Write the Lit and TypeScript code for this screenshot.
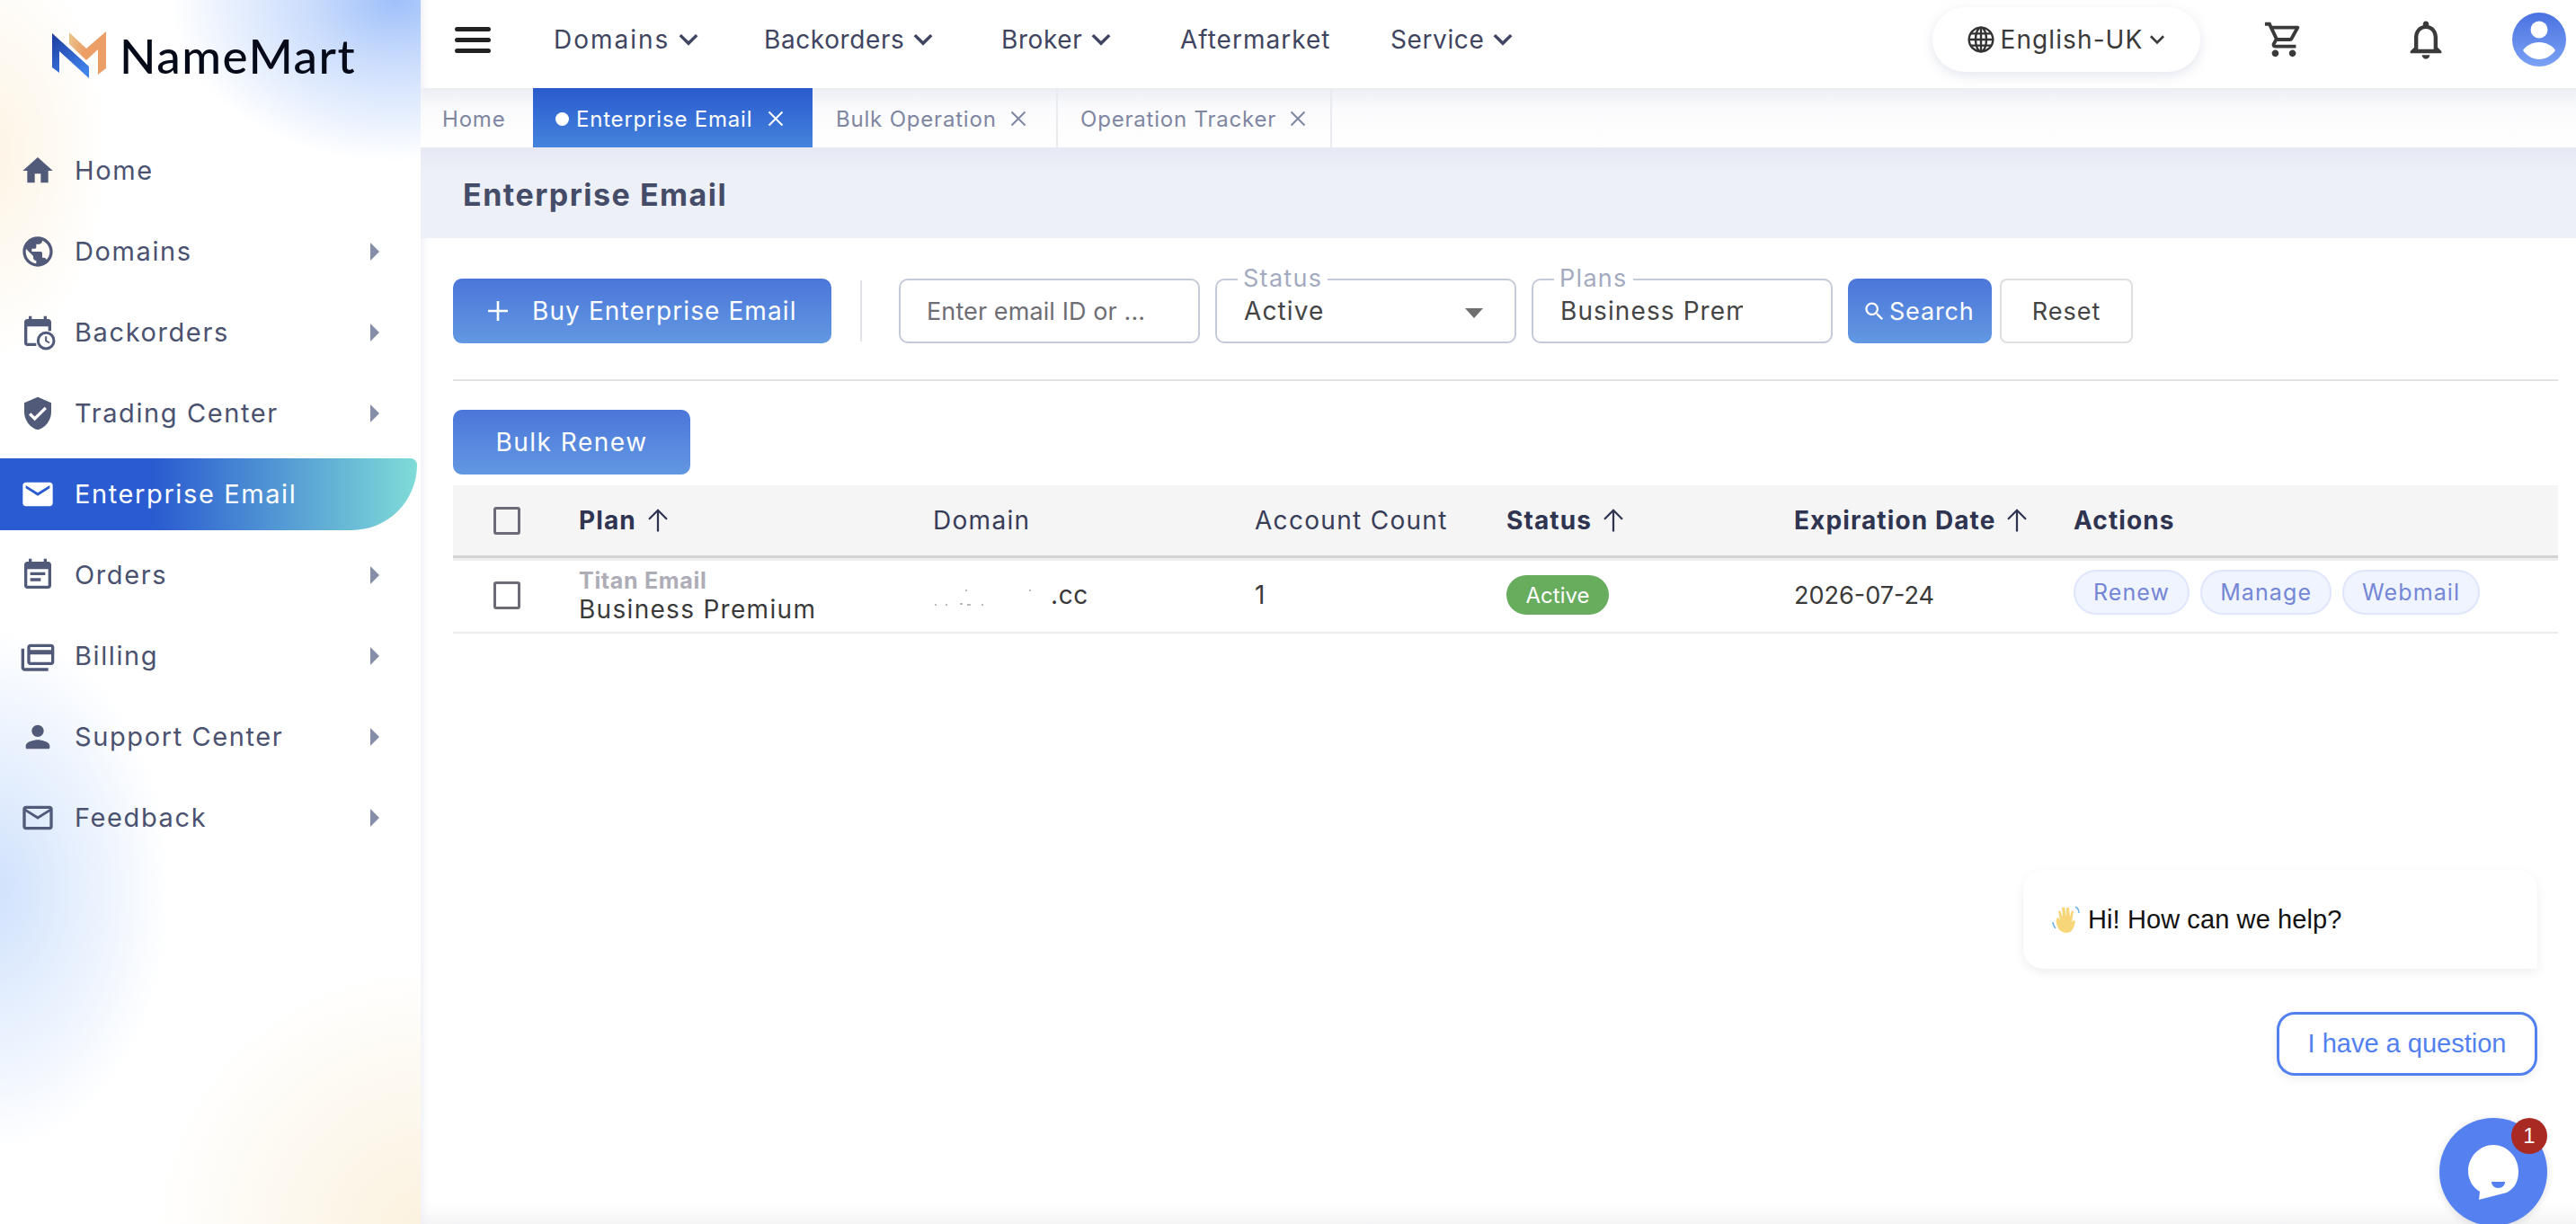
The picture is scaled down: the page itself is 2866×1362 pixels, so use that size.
import { LitElement, html, css, svg } from 'lit'
import { customElement } from 'lit/decorators.js'

const ICONS: Record<string, unknown> = {
  home: svg`<path d="M10 20v-6h4v6h5v-8h3L12 3 2 12h3v8z"/>`,
  public: svg`<path d="M12 2C6.48 2 2 6.48 2 12s4.48 10 10 10 10-4.48 10-10S17.52 2 12 2zm-1 17.93c-3.95-.49-7-3.85-7-7.93 0-.62.08-1.21.21-1.79L9 15v1c0 1.1.9 2 2 2v1.93zm6.9-2.54c-.26-.81-1-1.39-1.9-1.39h-1v-3c0-.55-.45-1-1-1H8v-2h2c.55 0 1-.45 1-1V7h2c1.1 0 2-.9 2-2v-.41c2.93 1.19 5 4.06 5 7.41 0 2.08-.8 3.97-2.1 5.39z"/>`,
  backorder: svg`<path d="M6 1h2v2h8V1h2v2h1c1.1 0 2 .9 2 2v6h-2V8H5v11h6v2H5c-1.1 0-2-.9-2-2V5c0-1.1.9-2 2-2h1z"/><circle cx="17.5" cy="17.5" r="5.300" fill="#fff" stroke="currentColor" stroke-width="1.8"/><path d="M16.900 14.500h1.200v2.700l2 1.200-.6 1-2.600-1.600z"/>`,
  shield: svg`<path d="M12 1L3 5v6c0 5.55 3.84 10.74 9 12 5.16-1.26 9-6.45 9-12V5l-9-4zm-2 16l-4-4 1.41-1.41L10 14.17l6.59-6.59L18 9l-8 8z"/>`,
  mail: svg`<path d="M20 4H4c-1.1 0-1.99.9-1.99 2L2 18c0 1.1.9 2 2 2h16c1.1 0 2-.9 2-2V6c0-1.1-.9-2-2-2zm0 4l-8 5-8-5V6l8 5 8-5v2z"/>`,
  note: svg`<path d="M17 10H7v2h10v-2zm2-7h-1V1h-2v2H8V1H6v2H5c-1.11 0-1.99.9-1.99 2L3 19c0 1.1.89 2 2 2h14c1.1 0 2-.9 2-2V5c0-1.1-.9-2-2-2zm0 16H5V8h14v11zm-5-5H7v2h7v-2z"/>`,
  billing: svg`<path d="M3 7H1v13c0 1.1.9 2 2 2h16v-2H3z"/><path d="M21 4H7c-1.1 0-2 .9-2 2v10c0 1.1.9 2 2 2h14c1.1 0 2-.9 2-2V6c0-1.1-.9-2-2-2zm0 12H7v-5h14zm0-8H7V6h14z"/>`,
  person: svg`<path d="M12 12c2.21 0 4-1.79 4-4s-1.79-4-4-4-4 1.79-4 4 1.79 4 4 4zm0 2c-2.67 0-8 1.34-8 4v1c0 .55.45 1 1 1h14c.55 0 1-.45 1-1v-1c0-2.66-5.33-4-8-4z"/>`,
  mailOutline: svg`<path d="M20 4H4c-1.1 0-1.99.9-1.99 2L2 18c0 1.1.9 2 2 2h16c1.1 0 2-.9 2-2V6c0-1.1-.9-2-2-2zm0 14H4V8l8 5 8-5v10zm-8-7L4 6h16l-8 5z"/>`,
}

const MENU = [
  { label: 'Home', icon: 'home', arrow: false },
  { label: 'Domains', icon: 'public', arrow: true },
  { label: 'Backorders', icon: 'backorder', arrow: true },
  { label: 'Trading Center', icon: 'shield', arrow: true },
  { label: 'Enterprise Email', icon: 'mail', arrow: false, active: true },
  { label: 'Orders', icon: 'note', arrow: true },
  { label: 'Billing', icon: 'billing', arrow: true },
  { label: 'Support Center', icon: 'person', arrow: true },
  { label: 'Feedback', icon: 'mailOutline', arrow: true },
]

const chevron = html`<svg class="chev" viewBox="0 0 24 24"><path d="M3.500 7.500 12 16l8.500-8.500" fill="none" stroke="currentColor" stroke-width="3.200"/></svg>`
const closeX = html`<svg class="x" viewBox="0 0 20 20"><path d="M2.500 2.500l15 15M17.500 2.500l-15 15" fill="none" stroke="currentColor" stroke-width="2"/></svg>`
const upArrow = html`<svg class="up" viewBox="0 0 24 24"><path d="M12 22V3M4 11l8-8 8 8" fill="none" stroke="currentColor" stroke-width="1.800"/></svg>`

@customElement('app-root')
export class AppRoot extends LitElement {
  static styles = css`
    :host {
      display: block;
      width: 2866px;
      height: 1362px;
      overflow: hidden;
      position: relative;
      font-family: Inter, 'Open Sans', sans-serif;
      color: #4a5270;
      background: #fff;
    }
    .shell {
      display: flex;
      height: 100%;
    }

    /* sidebar */
    .side {
      width: 468px;
      flex: none;
      padding-top: 36px;
      box-sizing: border-box;
      background:
        radial-gradient(250px 180px at 440px 0px, #9fc0fa 0%, rgba(159, 192, 250, 0.55) 38%, rgba(255, 255, 255, 0) 100%),
        radial-gradient(130px 230px at -10px 170px, #fdf4e4 0%, rgba(253, 244, 228, 0) 100%),
        radial-gradient(200px 290px at -10px 990px, #cfe1fc 0%, rgba(207, 225, 252, 0) 100%),
        radial-gradient(310px 300px at 480px 1375px, #fbf1dd 0%, rgba(251, 241, 221, 0) 100%),
        #fff;
    }
    .logo {
      display: flex;
      align-items: center;
      height: 50px;
      padding-left: 58px;
      gap: 15px;
    }
    .logo svg {
      width: 60px;
      height: 52px;
      flex: none;
    }
    .logo span {
      font-family: Lato, sans-serif;
      font-size: 53px;
      font-weight: 500;
      letter-spacing: 1.500px;
      color: #050a18;
    }
    .menu {
      margin-top: 64px;
      display: flex;
      flex-direction: column;
      gap: 10px;
    }
    .item {
      height: 80px;
      width: 464px;
      display: flex;
      align-items: center;
      padding-left: 25px;
      padding-right: 42px;
      box-sizing: border-box;
      font-size: 29px;
      letter-spacing: 1.600px;
    }
    .item .ic {
      width: 40px;
      height: 40px;
      margin-left: -3px;
      fill: #515a78;
      color: #515a78;
      flex: none;
    }
    .item .lb {
      margin: -2px 0 0 21px;
      flex: 1;
    }
    .item .tri {
      width: 0;
      height: 0;
      border-left: 10px solid #868da6;
      border-top: 10px solid transparent;
      border-bottom: 10px solid transparent;
    }
    .item.active {
      color: #fff;
      background: linear-gradient(90deg, #2a5bd0 37%, #7fdcd8 100%);
      border-radius: 0 8px 80px 0;
    }
    .item.active .ic {
      fill: #fff;
      color: #fff;
    }

    /* right side */
    .main {
      flex: 1;
      min-width: 0;
      display: flex;
      flex-direction: column;
      box-shadow: inset 10px 0 10px -8px rgba(120, 130, 170, 0.14);
    }
    .topbar {
      height: 98px;
      flex: none;
      box-sizing: border-box;
      padding: 0 0 10px 38px;
      display: flex;
      align-items: center;
      color: #3f4560;
      font-size: 28px;
      letter-spacing: 0.600px;
    }
    .burger {
      width: 40px;
      display: flex;
      flex-direction: column;
      gap: 7px;
      margin-right: 70px;
    }
    .burger i {
      height: 5px;
      border-radius: 3px;
      background: #222;
    }
    .nav {
      display: flex;
    }
    .nav div {
      display: flex;
      align-items: center;
      gap: 8px;
    }
    .chev {
      width: 26px;
      height: 26px;
      flex: none;
      letter-spacing: 0;
    }
    .n1 {
      width: 234px;
      letter-spacing: 2px;
    }
    .n2 {
      width: 264px;
    }
    .n3 {
      width: 199px;
    }
    .n4 {
      width: 234px;
      letter-spacing: 1px;
    }
    .top-right {
      margin-left: auto;
      display: flex;
      align-items: center;
      padding-right: 11px;
    }
    .lang {
      width: 298px;
      height: 72px;
      border-radius: 36px;
      background: #fff;
      box-shadow: 0 4px 14px rgba(120, 130, 170, 0.2);
      display: flex;
      align-items: center;
      justify-content: center;
      gap: 6px;
      color: #3a3a3a;
      font-size: 28px;
      letter-spacing: 1.100px;
    }
    .lang .chev {
      width: 20px;
      height: 20px;
    }
    .lang .globe {
      width: 32px;
      height: 32px;
    }
    .cart {
      width: 46px;
      height: 46px;
      margin-left: 70px;
      fill: #3a3a3a;
    }
    .bell {
      width: 52px;
      height: 52px;
      margin-left: 109px;
      fill: #3a3a3a;
    }
    .avatar {
      width: 60px;
      height: 60px;
      margin-left: 70px;
    }

    .tabs {
      height: 66px;
      flex: none;
      display: flex;
      background: linear-gradient(180deg, #eceef4 0%, #fbfbfd 35%, #fff 100%);
      font-size: 24px;
      color: #7f86a1;
      letter-spacing: 0.800px;
    }
    .tab {
      display: flex;
      align-items: center;
      box-sizing: border-box;
      padding-top: 2px;
      border-right: 2px solid #e9ebf1;
      gap: 14px;
    }
    .tab.home {
      width: 125px;
      padding-left: 24px;
      border-right: 0;
    }
    .tab.on {
      width: 311px;
      padding-left: 25px;
      color: #fff;
      border: 0;
      gap: 0;
      background: linear-gradient(180deg, #2a5bcd, #4583dd);
    }
    .tab.b {
      width: 273px;
      padding-left: 26px;
    }
    .tab.c {
      width: 305px;
      padding-left: 25px;
    }
    .dot {
      width: 15px;
      height: 15px;
      border-radius: 50%;
      background: #fff;
      margin-right: 8px;
    }
    .x {
      width: 20px;
      height: 20px;
      flex: none;
    }
    .tab.on .x {
      margin-left: 16px;
    }
    .band {
      height: 101px;
      flex: none;
      box-sizing: border-box;
      background: linear-gradient(180deg, #e6e9f3 0%, #eef0f8 30%);
      padding: 3px 0 0 47px;
      display: flex;
      align-items: center;
      font-size: 34px;
      font-weight: 700;
      letter-spacing: 1.500px;
      color: #454c68;
    }

    .content {
      padding: 45px 20px 0 36px;
    }
    .filters {
      display: flex;
      align-items: stretch;
      height: 72px;
    }
    .btn {
      border-radius: 10px;
      background: linear-gradient(180deg, #4b76d9, #6298e2);
      color: #fff;
      display: flex;
      align-items: center;
      box-sizing: border-box;
      font-size: 28px;
      letter-spacing: 1.100px;
    }
    .buy {
      width: 421px;
      padding-left: 38px;
      gap: 26px;
    }
    .buy svg {
      width: 24px;
      height: 24px;
      flex: none;
    }
    .vr {
      width: 2px;
      margin: 2px 41px 2px 32px;
      background: #e2e3e8;
    }
    .field {
      position: relative;
      width: 335px;
      margin-right: 17px;
      box-sizing: border-box;
      border: 2px solid #c5cadb;
      border-radius: 10px;
      display: flex;
      align-items: center;
      padding-left: 30px;
      font-size: 28px;
      color: #444;
      letter-spacing: 1.100px;
      white-space: nowrap;
    }
    .field.ph {
      color: #6e6e74;
      font-size: 27px;
      letter-spacing: 0.100px;
      padding-left: 29px;
    }
    .field label {
      position: absolute;
      top: -16px;
      left: 23px;
      padding: 0 6px;
      background: #fff;
      font-size: 27px;
      line-height: 28px;
      letter-spacing: 1.300px;
      color: #a4aabf;
    }
    .field .caret {
      position: absolute;
      right: 35px;
      top: 31px;
      border-top: 11px solid #6f6f6f;
      border-left: 10px solid transparent;
      border-right: 10px solid transparent;
    }
    .clip {
      display: block;
      width: 203px;
      overflow: hidden;
    }
    .search {
      width: 160px;
      padding-left: 16px;
      gap: 3px;
      margin-right: 9px;
      font-size: 27px;
      letter-spacing: 0.800px;
    }
    .search svg {
      width: 27px;
      height: 27px;
      fill: #fff;
      flex: none;
    }
    .reset {
      width: 148px;
      box-sizing: border-box;
      border: 2px solid #dfdfe2;
      border-radius: 8px;
      display: flex;
      align-items: center;
      justify-content: center;
      font-size: 27px;
      letter-spacing: 1px;
      color: #444;
    }
    .rule {
      height: 2px;
      margin-top: 40px;
      background: #e2e2e2;
    }
    .bulk {
      width: 264px;
      height: 72px;
      margin-top: 32px;
      justify-content: center;
      letter-spacing: 1.500px;
    }

    .grid {
      display: grid;
      grid-template-columns: 140px 394px 358px 280px 320px 311px 1fr;
      align-items: center;
      font-size: 28px;
      letter-spacing: 1.300px;
    }
    .head {
      height: 78px;
      margin-top: 12px;
      background: #f5f5f5;
      border-bottom: 3px solid #d3d3d3;
      box-shadow: 0 3px 0 #eeeeee;
      color: #383d58;
    }
    .head b {
      font-weight: 700;
      color: #2f3450;
      letter-spacing: 1.100px;
      display: flex;
      align-items: center;
      gap: 9px;
    }
    .up {
      width: 30px;
      height: 30px;
      flex: none;
    }
    .row {
      height: 82px;
      border-bottom: 2px solid #ebebeb;
      color: #3a3a3a;
    }
    .check {
      width: 30px;
      height: 31px;
      margin-left: 45px;
      box-sizing: border-box;
      border: 3px solid #6c6c76;
      border-radius: 3px;
    }
    .plan small {
      display: block;
      font-size: 25px;
      line-height: 28px;
      font-weight: 700;
      color: #adadb8;
      letter-spacing: 0.700px;
      margin-top: 3px;
    }
    .plan span {
      display: block;
      line-height: 36px;
    }
    .domain {
      display: flex;
      align-items: center;
      padding-left: 131px;
      position: relative;
      letter-spacing: 0.600px;
    }
    .domain svg {
      position: absolute;
      left: 0;
      top: 8px;
      width: 120px;
      height: 24px;
    }
    .pill {
      width: 114px;
      height: 44px;
      border-radius: 22px;
      background: #68ac5e;
      color: #fff;
      font-size: 24px;
      letter-spacing: 0;
      display: flex;
      align-items: center;
      justify-content: center;
    }
    .date {
      font-size: 27px;
      letter-spacing: 0;
    }
    .actions {
      display: flex;
      gap: 12px;
      margin-top: -6px;
    }
    .actions span {
      height: 50px;
      box-sizing: border-box;
      padding: 0 20px;
      border: 2px solid #dfe6fb;
      background: #f0f4fe;
      border-radius: 25px;
      color: #7486d6;
      font-size: 25px;
      letter-spacing: 1.100px;
      display: flex;
      align-items: center;
    }

    /* chat widget */
    .bubble {
      position: absolute;
      left: 2251px;
      top: 968px;
      width: 572px;
      height: 110px;
      box-sizing: border-box;
      background: #fff;
      border-radius: 22px 22px 0 22px;
      box-shadow: 0 4px 12px rgba(0, 0, 0, 0.07);
      display: flex;
      align-items: center;
      padding-left: 32px;
      gap: 8px;
      font-family: 'Liberation Sans', Arial, sans-serif;
      font-size: 29px;
      letter-spacing: 0.100px;
      color: #111;
    }
    .bubble svg {
      width: 32px;
      height: 32px;
      flex: none;
    }
    .ask {
      position: absolute;
      left: 2533px;
      top: 1126px;
      width: 290px;
      height: 71px;
      box-sizing: border-box;
      border: 3px solid #5280f0;
      border-radius: 20px;
      background: #fff;
      box-shadow: 0 4px 12px rgba(0, 0, 0, 0.06);
      display: flex;
      align-items: center;
      justify-content: center;
      font-family: 'Liberation Sans', Arial, sans-serif;
      font-size: 29px;
      color: #5280f0;
    }
    .launcher {
      position: absolute;
      left: 2714px;
      top: 1244px;
      width: 120px;
      height: 120px;
      border-radius: 50%;
      background: #5580f0;
      box-shadow: 0 2px 10px rgba(0, 0, 0, 0.12);
    }
    .launcher svg {
      position: absolute;
      left: 32px;
      top: 30px;
      width: 56px;
      height: 62px;
    }
    .badge {
      position: absolute;
      left: 80px;
      top: 0;
      width: 40px;
      height: 40px;
      border-radius: 50%;
      background: #a92a22;
      color: #fff;
      display: flex;
      align-items: center;
      justify-content: center;
      font-family: 'Liberation Sans', Arial, sans-serif;
      font-size: 24px;
    }
    .foot {
      position: absolute;
      left: 468px;
      right: 0;
      bottom: 0;
      height: 22px;
      background: linear-gradient(180deg, rgba(240, 240, 242, 0), rgba(240, 240, 242, 0.7));
    }
  `

  private renderSide() {
    return html`
      <aside class="side">
        <div class="logo">
          <svg viewBox="0 0 60 52">
            <defs>
              <linearGradient id="lb" x1="0" y1="0" x2="0.6" y2="1">
                <stop offset="0" stop-color="#1c3a9e" />
                <stop offset="1" stop-color="#3f82ea" />
              </linearGradient>
              <linearGradient id="lo" x1="0" y1="0" x2="1" y2="0.3">
                <stop offset="0" stop-color="#e8c68c" />
                <stop offset="0.5" stop-color="#eb9f66" />
                <stop offset="1" stop-color="#eb9f66" />
              </linearGradient>
            </defs>
            <path d="M19 1 38 19 60 0v41l-9 7V20L38 32 19 14z" fill="url(#lo)" />
            <path d="M0 2 41 39v13L8 22v24l-8-6z" fill="url(#lb)" />
          </svg>
          <span>NameMart</span>
        </div>
        <div class="menu">
          ${MENU.map(
            (m) => html`
              <div class="item ${m.active ? 'active' : ''}">
                <svg class="ic" viewBox="0 0 24 24">${ICONS[m.icon]}</svg>
                <span class="lb">${m.label}</span>
                ${m.arrow ? html`<i class="tri"></i>` : ''}
              </div>
            `,
          )}
        </div>
      </aside>
    `
  }

  private renderTop() {
    return html`
      <header class="topbar">
        <div class="burger"><i></i><i></i><i></i></div>
        <nav class="nav">
          <div class="n1">Domains ${chevron}</div>
          <div class="n2">Backorders ${chevron}</div>
          <div class="n3">Broker ${chevron}</div>
          <div class="n4">Aftermarket</div>
          <div>Service ${chevron}</div>
        </nav>
        <div class="top-right">
          <div class="lang">
            <svg class="globe" viewBox="0 0 24 24" fill="none" stroke="#333" stroke-width="1.800">
              <circle cx="12" cy="12" r="10" />
              <ellipse cx="12" cy="12" rx="4.500" ry="10" />
              <path d="M2 12h20M3.400 7h17.200M3.400 17h17.200M12 2v20" />
            </svg>
            English-UK ${chevron}
          </div>
          <svg class="cart" viewBox="0 0 24 24">
            <path d="M15.55 13c.75 0 1.41-.41 1.75-1.03l3.58-6.49c.37-.66-.11-1.48-.87-1.48H5.21l-.94-2H1v2h2l3.6 7.59-1.35 2.44C4.52 15.37 5.48 17 7 17h12v-2H7l1.1-2h7.45zM6.16 6h12.15l-2.76 5H8.53L6.16 6zM7 18c-1.1 0-1.99.9-1.99 2S5.9 22 7 22s2-.9 2-2-.9-2-2-2zm10 0c-1.1 0-1.99.9-1.99 2s.89 2 1.99 2 2-.9 2-2-.9-2-2-2z" />
          </svg>
          <svg class="bell" viewBox="0 0 24 24">
            <path d="M12 22c1.1 0 2-.9 2-2h-4c0 1.1.9 2 2 2zm6-6v-5c0-3.07-1.63-5.64-4.5-6.32V4c0-.83-.67-1.5-1.5-1.5s-1.5.67-1.5 1.5v.68C7.64 5.36 6 7.92 6 11v5l-2 2v1h16v-1l-2-2zm-2 1H8v-6c0-2.48 1.51-4.5 4-4.5s4 2.02 4 4.5v6z" />
          </svg>
          <svg class="avatar" viewBox="0 0 60 60">
            <defs>
              <linearGradient id="av" x1="0" y1="0" x2="0" y2="1">
                <stop offset="0" stop-color="#4a72e0" />
                <stop offset="1" stop-color="#7ba2f5" />
              </linearGradient>
            </defs>
            <circle cx="30" cy="30" r="30" fill="url(#av)" />
            <circle cx="30" cy="19" r="9.500" fill="#fff" />
            <path d="M30 33c8 0 15 4 18 9-4 6-11 10-18 10s-14-4-18-10c3-5 10-9 18-9z" fill="#fff" />
          </svg>
        </div>
      </header>
    `
  }

  private renderFilters() {
    return html`
      <div class="filters">
        <div class="btn buy">
          <svg viewBox="0 0 24 24"><path d="M12 1v22M1 12h22" stroke="#fff" stroke-width="2.600" fill="none" /></svg>
          Buy Enterprise Email
        </div>
        <div class="vr"></div>
        <div class="field ph">Enter email ID or ...</div>
        <div class="field"><label>Status</label>Active<i class="caret"></i></div>
        <div class="field"><label>Plans</label><span class="clip">Business Premium</span></div>
        <div class="btn search">
          <svg viewBox="0 0 24 24">
            <path d="M15.5 14h-.79l-.28-.27C15.41 12.59 16 11.11 16 9.5 16 5.91 13.09 3 9.5 3S3 5.91 3 9.5 5.91 16 9.5 16c1.61 0 3.09-.59 4.23-1.57l.27.28v.79l5 4.99L20.49 19l-4.99-5zm-6 0C7.01 14 5 11.99 5 9.5S7.01 5 9.5 5 14 7.01 14 9.5 11.99 14 9.5 14z" />
          </svg>
          Search
        </div>
        <div class="reset">Reset</div>
      </div>
    `
  }

  private renderTable() {
    return html`
      <div class="grid head">
        <div><div class="check"></div></div>
        <b>Plan ${upArrow}</b>
        <div>Domain</div>
        <div>Account Count</div>
        <b>Status ${upArrow}</b>
        <b>Expiration Date ${upArrow}</b>
        <b>Actions</b>
      </div>
      <div class="grid row">
        <div><div class="check"></div></div>
        <div class="plan"><small>Titan Email</small><span>Business Premium</span></div>
        <div class="domain">
          <svg viewBox="0 0 120 24" fill="#b9b9c0">
            <rect x="2" y="19" width="2" height="2" /><rect x="14" y="19" width="2" height="2" />
            <rect x="30" y="18" width="3" height="2" /><rect x="38" y="19" width="4" height="2" />
            <rect x="36" y="3" width="2" height="2" /><rect x="107" y="3" width="2" height="2" />
            <rect x="54" y="19" width="2" height="2" />
          </svg>
          .cc
        </div>
        <div>1</div>
        <div><div class="pill">Active</div></div>
        <div class="date">2026-07-24</div>
        <div class="actions"><span>Renew</span><span>Manage</span><span>Webmail</span></div>
      </div>
    `
  }

  render() {
    return html`
      <div class="shell">
        ${this.renderSide()}
        <main class="main">
          ${this.renderTop()}
          <div class="tabs">
            <div class="tab home">Home</div>
            <div class="tab on"><i class="dot"></i>Enterprise Email ${closeX}</div>
            <div class="tab b">Bulk Operation ${closeX}</div>
            <div class="tab c">Operation Tracker ${closeX}</div>
          </div>
          <div class="band">Enterprise Email</div>
          <div class="content">
            ${this.renderFilters()}
            <div class="rule"></div>
            <div class="btn bulk">Bulk Renew</div>
            ${this.renderTable()}
          </div>
        </main>
      </div>
      <div class="foot"></div>
      <div class="bubble">
        <svg viewBox="0 0 32 32">
          <path d="M9 29C5 24 4 18 5 15l2-1 2 3-2-10 2-1 3 8-1-11 3-1 2 11 0-10 3 0 1 10 2-7 2 1-2 12 2-2 2 1c-1 6-3 10-6 12-4 2-8 1-11-2z" fill="#f7d579" />
          <path d="M1 19c0 3 1 5 3 7M26 2c2 1 4 4 4 7" fill="none" stroke="#6fb6e8" stroke-width="1.500" />
        </svg>
        Hi! How can we help?
      </div>
      <div class="ask">I have a question</div>
      <div class="launcher">
        <svg viewBox="0 0 56 62">
          <path d="M28 0c15 0 28 13 28 30 0 11-5 19-13 23L12 61l1-9C5 47 0 39 0 29 0 13 13 0 28 0z" fill="#fff" />
          <path d="M26 41h15c0 4-3 7-7.500 7S26 45 26 41z" fill="#5580f0" />
        </svg>
        <div class="badge">1</div>
      </div>
    `
  }
}

declare global {
  interface HTMLElementTagNameMap {
    'app-root': AppRoot
  }
}
